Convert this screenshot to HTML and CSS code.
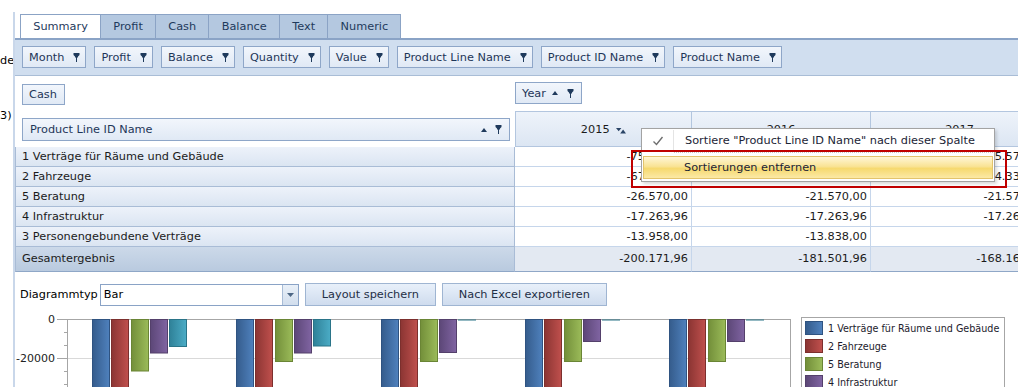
FILE: index.html
```html
<!DOCTYPE html>
<html lang="de">
<head>
    <meta charset="UTF-8">
    <meta name="viewport" content="width=device-width, initial-scale=1.0">
    <title>Pivot - Summary</title>
    <link rel="stylesheet" href="styles.css">
</head>
<body>
    <svg class="defs" width="0" height="0">
        <symbol id="i-filter" viewBox="0 0 7 9"><path d="M0.5 0H6.5V2L5 3.5V4.5H4V9H3V4.5H2V3.5L0.5 2Z"/></symbol>
        <symbol id="i-up" viewBox="0 0 6 4"><path d="M0 4L3 0L6 4Z"/></symbol>
        <symbol id="i-sort" viewBox="0 0 10 7"><path d="M0 1H5.4L2.7 4.2Z M4.2 6.6H10L7.1 2.6Z"/></symbol>
    </svg>

    <div class="page">
        <div class="side">
            <span class="cut cut-de">de</span>
            <span class="cut cut-3">3)</span>
        </div>

        <div class="main">
            <div class="tabs">
                <div class="tab active">Summary</div>
                <div class="tab">Profit</div>
                <div class="tab">Cash</div>
                <div class="tab">Balance</div>
                <div class="tab">Text</div>
                <div class="tab">Numeric</div>
            </div>

            <div class="filter-bar">
                <div class="field">Month <svg class="ico-filter"><use href="#i-filter"/></svg></div>
                <div class="field">Profit <svg class="ico-filter"><use href="#i-filter"/></svg></div>
                <div class="field">Balance <svg class="ico-filter"><use href="#i-filter"/></svg></div>
                <div class="field">Quantity <svg class="ico-filter"><use href="#i-filter"/></svg></div>
                <div class="field">Value <svg class="ico-filter"><use href="#i-filter"/></svg></div>
                <div class="field">Product Line Name <svg class="ico-filter"><use href="#i-filter"/></svg></div>
                <div class="field">Product ID Name <svg class="ico-filter"><use href="#i-filter"/></svg></div>
                <div class="field">Product Name <svg class="ico-filter"><use href="#i-filter"/></svg></div>
            </div>

            <div class="pivot">
                <div class="data-area"><div class="field field-cash">Cash</div></div>
                <div class="col-area">
                    <div class="field field-year">Year
                        <svg class="ico-up"><use href="#i-up"/></svg>
                        <svg class="ico-filter"><use href="#i-filter"/></svg>
                    </div>
                </div>

                <div class="row-area">
                    <div class="field field-rows">
                        <span>Product Line ID Name</span>
                        <span class="icons">
                            <svg class="ico-up"><use href="#i-up"/></svg>
                            <svg class="ico-filter"><use href="#i-filter"/></svg>
                        </span>
                    </div>
                </div>
                <div class="col-head first">2015 <svg class="ico-sort"><use href="#i-sort"/></svg></div>
                <div class="col-head">2016</div>
                <div class="col-head">2017</div>

                <div class="row-head">1 Verträge für Räume und Gebäude</div>
                <div class="cell">-75.130,00</div>
                <div class="cell">-75.130,00</div>
                <div class="cell">-75.575,00</div>

                <div class="row-head">2 Fahrzeuge</div>
                <div class="cell">-67.250,00</div>
                <div class="cell">-53.700,00</div>
                <div class="cell">-54.334,33</div>

                <div class="row-head">5 Beratung</div>
                <div class="cell">-26.570,00</div>
                <div class="cell">-21.570,00</div>
                <div class="cell">-21.570,00</div>

                <div class="row-head">4 Infrastruktur</div>
                <div class="cell">-17.263,96</div>
                <div class="cell">-17.263,96</div>
                <div class="cell">-17.263,96</div>

                <div class="row-head">3 Personengebundene Verträge</div>
                <div class="cell">-13.958,00</div>
                <div class="cell">-13.838,00</div>
                <div class="cell"></div>

                <div class="row-head total">Gesamtergebnis</div>
                <div class="cell total">-200.171,96</div>
                <div class="cell total">-181.501,96</div>
                <div class="cell total">-168.161,96</div>
            </div>

            <div class="chart-tools">
                <span class="label">Diagrammtyp</span>
                <div class="select">
                    <span class="select-value">Bar</span>
                    <span class="select-btn"><svg width="7" height="4" viewBox="0 0 7 4"><path d="M0 0H7L3.5 4Z"/></svg></span>
                </div>
                <button class="btn btn-save">Layout speichern</button>
                <button class="btn btn-export">Nach Excel exportieren</button>
            </div>

            <div class="chart">
                <svg class="plot" width="786" height="75" viewBox="0 0 786 75">
                    <defs>
                        <linearGradient id="g-blue" x1="0" x2="1"><stop offset="0" stop-color="#355c8c"/><stop offset="1" stop-color="#4f81bd"/></linearGradient>
                        <linearGradient id="g-red" x1="0" x2="1"><stop offset="0" stop-color="#8b3533"/><stop offset="1" stop-color="#c0504d"/></linearGradient>
                        <linearGradient id="g-green" x1="0" x2="1"><stop offset="0" stop-color="#738f3a"/><stop offset="1" stop-color="#9bbb59"/></linearGradient>
                        <linearGradient id="g-purple" x1="0" x2="1"><stop offset="0" stop-color="#5c4777"/><stop offset="1" stop-color="#8064a2"/></linearGradient>
                        <linearGradient id="g-cyan" x1="0" x2="1"><stop offset="0" stop-color="#2f8198"/><stop offset="1" stop-color="#4bacc6"/></linearGradient>
                    </defs>

                    <text class="axis-label" x="40" y="11" text-anchor="end">0</text>
                    <text class="axis-label" x="40" y="50" text-anchor="end">-20000</text>

                    <line x1="52" y1="46.5" x2="775" y2="46.5" class="grid"/>
                    <line x1="42" y1="7.5" x2="775" y2="7.5" class="axis"/>
                    <line x1="42" y1="46.5" x2="52" y2="46.5" class="axis"/>
                    <line x1="52.5" y1="7" x2="52.5" y2="75" class="axis"/>
                    <line x1="775.5" y1="7" x2="775.5" y2="75" class="axis"/>
                    <path class="axis" d="M49 20.5H52M49 33.5H52M49 59.5H52M49 72.5H52"/>

                    <g class="bar-blue">
                        <rect x="77.5" y="7.5" width="17" height="80"/>
                        <rect x="221.5" y="7.5" width="17" height="80"/>
                        <rect x="366.5" y="7.5" width="17" height="80"/>
                        <rect x="510.5" y="7.5" width="17" height="80"/>
                        <rect x="654.5" y="7.5" width="17" height="80"/>
                    </g>
                    <g class="bar-red">
                        <rect x="96.5" y="7.5" width="17" height="80"/>
                        <rect x="240.5" y="7.5" width="17" height="80"/>
                        <rect x="385.5" y="7.5" width="17" height="80"/>
                        <rect x="529.5" y="7.5" width="17" height="80"/>
                        <rect x="673.5" y="7.5" width="17" height="80"/>
                    </g>
                    <g class="bar-green">
                        <rect x="116.5" y="7.5" width="17" height="51.5"/>
                        <rect x="260.5" y="7.5" width="17" height="42"/>
                        <rect x="405.5" y="7.5" width="17" height="42"/>
                        <rect x="549.5" y="7.5" width="17" height="42"/>
                        <rect x="693.5" y="7.5" width="17" height="42"/>
                    </g>
                    <g class="bar-purple">
                        <rect x="135.5" y="7.5" width="17" height="33.5"/>
                        <rect x="279.5" y="7.5" width="17" height="33.5"/>
                        <rect x="424.5" y="7.5" width="17" height="33"/>
                        <rect x="568.5" y="7.5" width="17" height="22"/>
                        <rect x="712.5" y="7.5" width="17" height="22"/>
                    </g>
                    <g class="bar-cyan">
                        <rect x="154.5" y="7.5" width="17" height="27"/>
                        <rect x="298.5" y="7.5" width="17" height="26.5"/>
                    </g>
                    <path class="zero-cyan" d="M443 8H461M587 8H605M731 8H749"/>
                </svg>

                <div class="legend">
                    <div class="legend-item"><span class="swatch sw-blue"></span>1 Verträge für Räume und Gebäude</div>
                    <div class="legend-item"><span class="swatch sw-red"></span>2 Fahrzeuge</div>
                    <div class="legend-item"><span class="swatch sw-green"></span>5 Beratung</div>
                    <div class="legend-item"><span class="swatch sw-purple"></span>4 Infrastruktur</div>
                    <div class="legend-item"><span class="swatch sw-cyan"></span>3 Personengebundene Verträge</div>
                </div>
            </div>
        </div>

        <!-- Kontextmenü über der Spalte 2015 -->
        <div class="ctx-menu">
            <div class="ctx-item">
                <span class="ctx-icon">
                    <svg width="12" height="10" viewBox="0 0 12 10"><path d="M1.5 5.5L4.5 8.5L10.5 1"/></svg>
                </span>
                <span class="ctx-text">Sortiere "Product Line ID Name" nach dieser Spalte</span>
            </div>
            <div class="ctx-sep"></div>
            <div class="ctx-item hot">
                <span class="ctx-icon"></span>
                <span class="ctx-text">Sortierungen entfernen</span>
            </div>
        </div>
        <div class="mark-box"></div>
    </div>
</body>
</html>
```

FILE: styles.css
```css
body {
    margin: 0;
    font-family: "DejaVu Sans", Verdana, sans-serif;
    font-size: 11.3px;
    color: #1b1b1b;
    background: #fff;
    overflow: hidden;
}

.defs {
    position: absolute;
    width: 0;
    height: 0;
}

.page {
    display: flex;
    position: relative;
    width: 1018px;
    height: 387px;
    overflow: hidden;
}

.side {
    width: 13px;
    flex: none;
    overflow: hidden;
}

.cut {
    display: block;
    white-space: nowrap;
    text-align: right;
    color: #000;
    line-height: 13px;
}

.cut-de {
    margin-top: 54px;
}

.cut-3 {
    margin-top: 42px;
    padding-right: 3px;
}

.main {
    flex: 1;
    min-width: 0;
    margin-top: 12px;
    padding-top: 2px;
    border-left: 2px solid #c9d7ea;
}

/* Tabs */
.tabs {
    display: flex;
    margin-left: 5px;
    height: 24px;
}

.tab {
    padding: 0 12.25px;
    line-height: 23px;
    border: 1px solid #8ba3c5;
    border-bottom: none;
    border-left: none;
    background: #b4c8e0;
    color: #1e3a5c;
}

.tab:first-child {
    border-left: 1px solid #8ba3c5;
}

.tab.active {
    background: #fff;
}

/* Filterleiste */
.filter-bar {
    display: flex;
    gap: 8px;
    height: 22px;
    padding: 6px 0 7px 7px;
    background: #d0deef;
    border-top: 2px solid #8aa3c6;
    border-bottom: 1px solid #a9bdd6;
}

.field {
    display: flex;
    align-items: center;
    gap: 9px;
    height: 22px;
    box-sizing: border-box;
    padding: 0 5px 0 6px;
    border: 1px solid #8ea6c8;
    background: linear-gradient(#f2f6fc, #e0e9f5);
    color: #1e3658;
    white-space: nowrap;
    flex: none;
}

.ico-filter {
    width: 7px;
    height: 9px;
    fill: #1f3a5c;
    flex: none;
}

.ico-up {
    width: 6px;
    height: 4px;
    fill: #1f3a5c;
    flex: none;
}

.ico-sort {
    width: 10px;
    height: 7px;
    fill: #2a4466;
    margin-left: 3px;
    vertical-align: -1px;
}

/* Pivot */
.pivot {
    display: grid;
    grid-template-columns: 500px 177px 179px 178px;
    grid-template-rows: 35px 36px repeat(5, 20px) 25px;
}

.data-area {
    padding: 8px 0 0 7px;
}

.field-cash {
    display: inline-flex;
    height: 21px;
    padding-right: 7px;
}

.col-area {
    grid-column: 2 / 5;
    padding-top: 6px;
}

.field-year {
    display: inline-flex;
    gap: 6px;
    padding-right: 7px;
}

.field-year .ico-filter {
    margin-left: 3px;
}

.row-area {
    padding: 7px 5px 0 7px;
}

.field-rows {
    height: 23px;
    justify-content: space-between;
    padding: 0 7px 0 7px;
}

.field-rows .icons {
    display: flex;
    align-items: center;
    gap: 8px;
}

.col-head {
    box-sizing: border-box;
    border-top: 1px solid #b3c6df;
    border-right: 1px solid #b3c6df;
    border-bottom: 1px solid #b3c6df;
    background: linear-gradient(#eef3fa, #dce6f3);
    text-align: center;
    line-height: 36px;
    color: #1b1b1b;
}

.col-head.first {
    border-left: 1px solid #b3c6df;
}

.row-head {
    box-sizing: border-box;
    padding-left: 6px;
    line-height: 20px;
    border-left: 1px solid #a9bcd6;
    border-right: 1px solid #a9bcd6;
    border-bottom: 1px solid #a9bcd6;
    background: linear-gradient(#edf2fa, #dbe5f2);
    white-space: nowrap;
}

.cell {
    box-sizing: border-box;
    padding-right: 3px;
    line-height: 20px;
    text-align: right;
    border-right: 1px solid #c6d6eb;
    border-bottom: 1px solid #c6d6eb;
    background: #fff;
    white-space: nowrap;
}

.row-head.total {
    line-height: 24px;
    background: linear-gradient(#ccd9e9, #b9cadf);
    border-bottom-color: #8fa7c7;
}

.cell.total {
    line-height: 24px;
    background: #e3e9f2;
    border-bottom-color: #8fa7c7;
}

/* Diagramm-Werkzeuge */
.chart-tools {
    display: flex;
    align-items: center;
    height: 23px;
    margin-top: 11px;
    padding-left: 5px;
}

.label {
    color: #000;
}

.select {
    display: flex;
    width: 199px;
    height: 22px;
    box-sizing: border-box;
    margin-left: 2px;
    border: 1px solid #8aa3c6;
    background: #fff;
}

.select-value {
    flex: 1;
    padding-left: 3px;
    line-height: 20px;
    color: #000;
}

.select-btn {
    display: flex;
    align-items: center;
    justify-content: center;
    width: 15px;
    border-left: 1px solid #a8bcd6;
    background: linear-gradient(#e9f0f8, #d2deed);
    fill: #4d6785;
}

.btn {
    height: 23px;
    margin-left: 6px;
    padding: 0;
    border: 1px solid #9fb5d2;
    background: linear-gradient(#e8f0fa, #cfdcee);
    color: #1e2f46;
    font-family: inherit;
    font-size: inherit;
}

.btn-save {
    width: 131px;
}

.btn-export {
    width: 165px;
}

/* Diagramm */
.chart {
    display: flex;
    align-items: flex-start;
    margin-top: 6px;
}

.plot {
    flex: none;
    display: block;
}

.axis-label {
    font-size: 11px;
    fill: #222;
}

.axis {
    stroke: #a6a6a6;
    stroke-width: 1;
    fill: none;
}

.grid {
    stroke: #d9d9d9;
    stroke-width: 1;
}

.bar-blue rect { fill: url(#g-blue); stroke: #2f5381; }
.bar-red rect { fill: url(#g-red); stroke: #7c2f2d; }
.bar-green rect { fill: url(#g-green); stroke: #6a8535; }
.bar-purple rect { fill: url(#g-purple); stroke: #54406b; }
.bar-cyan rect { fill: url(#g-cyan); stroke: #2a7488; }

.zero-cyan {
    stroke: #2a7488;
    stroke-width: 1;
}

.legend {
    flex: none;
    width: 204px;
    box-sizing: border-box;
    margin-top: 5px;
    padding: 1px 0 0 3px;
    border: 1px solid #a6a6a6;
    font-size: 9.6px;
    color: #1c1a2c;
    white-space: nowrap;
    overflow: hidden;
}

.legend-item {
    display: flex;
    align-items: center;
    gap: 5px;
    height: 18px;
}

.swatch {
    width: 18px;
    height: 14px;
    box-sizing: border-box;
    flex: none;
}

.sw-blue { background: linear-gradient(to right, #355c8c, #4f81bd); border: 1px solid #2f5381; }
.sw-red { background: linear-gradient(to right, #8b3533, #c0504d); border: 1px solid #7c2f2d; }
.sw-green { background: linear-gradient(to right, #738f3a, #9bbb59); border: 1px solid #6a8535; }
.sw-purple { background: linear-gradient(to right, #5c4777, #8064a2); border: 1px solid #54406b; }
.sw-cyan { background: linear-gradient(to right, #2f8198, #4bacc6); border: 1px solid #2a7488; }

/* Kontextmenü */
.ctx-menu {
    position: absolute;
    left: 641px;
    top: 128px;
    width: 354px;
    box-sizing: border-box;
    padding: 1px 1px 2px;
    border: 1px solid #a3a3a3;
    background: #fff;
    box-shadow: 2px 2px 3px rgba(0, 0, 0, 0.15);
}

.ctx-item {
    display: flex;
    align-items: center;
    height: 21px;
    box-sizing: border-box;
    white-space: nowrap;
}

.ctx-icon {
    display: flex;
    align-items: center;
    justify-content: center;
    width: 30px;
    height: 100%;
    border-right: 1px solid #e4e4e4;
    stroke: #6e6e6e;
    stroke-width: 1.4;
    fill: none;
}

.ctx-text {
    padding-left: 11px;
    color: #1b2436;
}

.ctx-sep {
    margin: 1px 0 3px 31px;
    border-top: 1px dotted #c8c8c8;
}

.ctx-item.hot {
    height: 23px;
    border: 1px solid #e3c46c;
    background: linear-gradient(#fff6d6, #f9e394 45%, #f6d96f 55%, #fbe9a6);
}

.ctx-item.hot .ctx-icon {
    width: 29px;
    border-right: none;
}

.mark-box {
    position: absolute;
    left: 631px;
    top: 150px;
    width: 376px;
    height: 38px;
    box-sizing: border-box;
    border: 2px solid #c00000;
}
```
